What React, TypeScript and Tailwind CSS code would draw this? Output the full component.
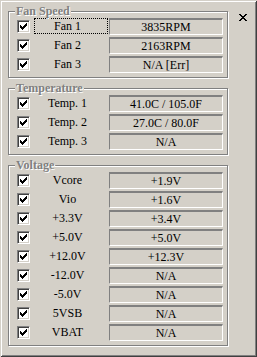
const fans = [
  { label: "Fan 1", value: "3835RPM", focus: true },
  { label: "Fan 2", value: "2163RPM" },
  { label: "Fan 3", value: "N/A [Err]" },
];

const temps = [
  { label: "Temp. 1", value: "41.0C / 105.0F" },
  { label: "Temp. 2", value: "27.0C / 80.0F" },
  { label: "Temp. 3", value: "N/A" },
];

const volts = [
  { label: "Vcore", value: "+1.9V" },
  { label: "Vio", value: "+1.6V" },
  { label: "+3.3V", value: "+3.4V" },
  { label: "+5.0V", value: "+5.0V" },
  { label: "+12.0V", value: "+12.3V" },
  { label: "-12.0V", value: "N/A" },
  { label: "-5.0V", value: "N/A" },
  { label: "5VSB", value: "N/A" },
  { label: "VBAT", value: "N/A" },
];

type Item = { label: string; value: string; focus?: boolean };

function CheckBox() {
  return (
    <div className="w-[13px] h-[13px] shrink-0 bg-white border border-t-[#808080] border-l-[#808080] border-b-white border-r-white shadow-[inset_1px_1px_0_#404040,inset_-1px_-1px_0_#d4d0c8]">
      <svg width="11" height="11" viewBox="0 0 11 11" shapeRendering="crispEdges">
        <path
          fill="#000"
          d="M8 2h1v1H8z M7 3h2v1H7z M2 4h1v1H2z M6 4h3v1H6z M2 5h2v1H2z M5 5h3v1H5z M2 6h5v1H2z M3 7h3v1H3z M4 8h1v1H4z"
        />
      </svg>
    </div>
  );
}

function Row({ item }: { item: Item }) {
  return (
    <div className="flex items-start h-[19px] pl-[8px]">
      <div className="mt-[3px]">
        <CheckBox />
      </div>
      <div
        className={
          item.focus
            ? "ml-[4px] mt-[1px] w-[74px] h-[16px] pr-[7px] flex items-center justify-center border border-dotted border-black"
            : "ml-[4px] mt-[1px] w-[74px] h-[16px] pr-[7px] flex items-center justify-center border border-transparent"
        }
      >
        {item.label}
      </div>
      <div className="ml-[1px] mt-[1px] w-[114px] h-[17px] flex items-center justify-center border-t-2 border-l border-b border-r border-t-[#808080] border-l-[#808080] border-b-white border-r-white">
        {item.value}
      </div>
    </div>
  );
}

function Group({ title, items }: { title: string; items: Item[] }) {
  return (
    <div className="relative border border-[#808080] shadow-[inset_1px_1px_0_#fff,1px_1px_0_#fff] pt-[5px] pb-[3px]">
      <span className="absolute -top-[8px] left-[6px] px-[1px] bg-[#d4d0c8] text-[#808080] font-bold text-[12px] leading-[14px] [text-shadow:1px_1px_0_#fff]">
        {title}
      </span>
      {items.map((it) => (
        <Row key={it.label} item={it} />
      ))}
    </div>
  );
}

export default function App() {
  return (
    <div className="w-[257px] h-[357px] bg-[#d4d0c8] shadow-[inset_1px_1px_0_#d4d0c8,inset_-1px_-1px_0_#404040,inset_2px_2px_0_#fff,inset_-2px_-2px_0_#808080] flex pl-[8px] pt-[11px] font-['Liberation_Serif',serif] text-[12px] leading-[14px] text-black">
      <div className="flex flex-col gap-[10px] w-[220px]">
        <Group title="Fan Speed" items={fans} />
        <Group title="Temperature" items={temps} />
        <Group title="Voltage" items={volts} />
      </div>

      {/* close button */}
      <div className="pl-[11px] pt-[3px]">
        <svg width="8" height="7" viewBox="0 0 8 7" shapeRendering="crispEdges">
          <path
            fill="#000"
            d="M0 0h2v1H0z M6 0h2v1H6z M1 1h2v1H1z M5 1h2v1H5z M2 2h4v1H2z M3 3h2v1H3z M2 4h4v1H2z M1 5h2v1H1z M5 5h2v1H5z M0 6h2v1H0z M6 6h2v1H6z"
          />
        </svg>
      </div>
    </div>
  );
}
